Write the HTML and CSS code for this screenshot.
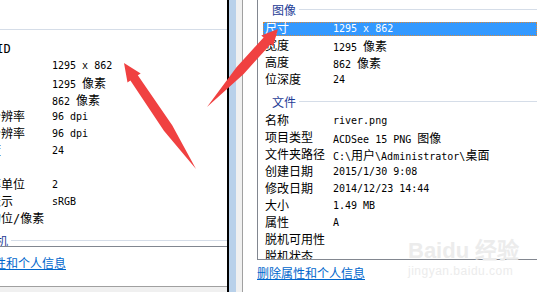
FILE: index.html
```html
<!DOCTYPE html>
<html lang="zh-CN">
<head>
    <meta charset="UTF-8">
    <meta name="viewport" content="width=device-width, initial-scale=1.0">
    <title>属性 - 详细信息</title>
    <link rel="stylesheet" href="styles.css">
</head>
<body>
    <div class="screen">
        <!-- Left dialog (scrolled, labels cut off) -->
        <div class="pane pane-left">
            <div class="prop-box">
                <div class="prop-list">
                    <div class="group"><span class="group-title">图像</span></div>
                    <div class="row"><span class="key">图像 ID</span><span class="val"></span></div>
                    <div class="row"><span class="key">尺寸</span><span class="val">1295 x 862</span></div>
                    <div class="row"><span class="key">宽度</span><span class="val">1295 <span class="cn">像素</span></span></div>
                    <div class="row"><span class="key">高度</span><span class="val">862 <span class="cn">像素</span></span></div>
                    <div class="row"><span class="key">水平分辨率</span><span class="val">96 dpi</span></div>
                    <div class="row"><span class="key">垂直分辨率</span><span class="val">96 dpi</span></div>
                    <div class="row"><span class="key">位深度</span><span class="val">24</span></div>
                    <div class="row"><span class="key">压缩</span><span class="val"></span></div>
                    <div class="row"><span class="key">分辨率单位</span><span class="val">2</span></div>
                    <div class="row"><span class="key">颜色表示</span><span class="val">sRGB</span></div>
                    <div class="row"><span class="key">压缩的位/像素</span><span class="val"></span></div>
                    <div class="group"><span class="group-title">照相机</span></div>
                </div>
            </div>
            <a class="remove-link" href="#">删除属性和个人信息</a>
            <div class="button-bar"></div>
        </div>

        <div class="splitter"></div>

        <!-- Right dialog -->
        <div class="pane pane-right">
            <div class="prop-box">
                <div class="prop-list">
                    <div class="group"><span class="group-title">图像</span></div>
                    <div class="row selected"><span class="key">尺寸</span><span class="val">1295 x 862</span></div>
                    <div class="row"><span class="key">宽度</span><span class="val">1295 <span class="cn">像素</span></span></div>
                    <div class="row"><span class="key">高度</span><span class="val">862 <span class="cn">像素</span></span></div>
                    <div class="row"><span class="key">位深度</span><span class="val">24</span></div>
                    <div class="group"><span class="group-title">文件</span></div>
                    <div class="row"><span class="key">名称</span><span class="val">river.png</span></div>
                    <div class="row"><span class="key">项目类型</span><span class="val">ACDSee 15 PNG <span class="cn">图像</span></span></div>
                    <div class="row"><span class="key">文件夹路径</span><span class="val">C:\<span class="cn">用户</span>\Administrator\<span class="cn">桌面</span></span></div>
                    <div class="row"><span class="key">创建日期</span><span class="val">2015/1/30 9:08</span></div>
                    <div class="row"><span class="key">修改日期</span><span class="val">2014/12/23 14:44</span></div>
                    <div class="row"><span class="key">大小</span><span class="val">1.49 MB</span></div>
                    <div class="row"><span class="key">属性</span><span class="val">A</span></div>
                    <div class="row"><span class="key">脱机可用性</span><span class="val"></span></div>
                    <div class="row"><span class="key">脱机状态</span><span class="val"></span></div>
                </div>
            </div>
            <a class="remove-link" href="#">删除属性和个人信息</a>
        </div>

        <!-- red annotation arrows -->
        <svg class="arrows" width="537" height="292" viewBox="0 0 537 292">
            <polygon points="124,63 140.7,73.4 137.8,75.3 172.2,125.2 196,169 163.9,130.8 130.4,80.4 127.5,82.4" />
            <polygon points="278,29 261.3,35.4 263.6,37.5 236.5,67.3 207,107 243.7,73.9 270.8,44.1 273.1,46.2" />
        </svg>

        <div class="watermark">
            <div class="wm-logo">Bai<span class="wm-du">du</span> 经验</div>
            <div class="wm-url">jingyan.baidu.com</div>
        </div>
    </div>
</body>
</html>
```

FILE: styles.css
```css
body {
    margin: 0;
    font-family: "Noto Sans CJK SC", sans-serif;
    font-size: 12px;
    color: #000;
    background: #fff;
}

.screen {
    position: relative;
    display: flex;
    width: 537px;
    height: 292px;
    overflow: hidden;
}

.pane {
    display: flex;
    flex-direction: column;
    overflow: hidden;
    background: #fff;
}

.pane-left {
    width: 227px;
    flex-shrink: 0;
    border-right: 2px solid #000;
}

.splitter {
    width: 13px;
    flex-shrink: 0;
    background: linear-gradient(to right, #b9d1ea 0 7px, #f0f0f0 7px 13px);
    border-right: 1px solid #a0a0a0;
}

.pane-right {
    flex: 1;
}

.prop-box {
    overflow: hidden;
    border-bottom: 1px solid #828790;
    flex-shrink: 0;
}

.pane-left .prop-box {
    height: 246px;
}

.pane-right .prop-box {
    height: 259px;
    margin-left: 14px;
    border-left: 1px solid #828790;
}

.pane-left .prop-list {
    margin-left: -37px;
    padding-top: 20px;
}

.pane-right .prop-list {
    padding-left: 5px;
}

.group {
    display: flex;
    align-items: center;
    height: 19px;
    margin: 5px 0 3px;
    white-space: nowrap;
}

.group:first-child {
    margin-top: 0;
}

.group-title {
    padding-left: 9px;
    color: #1e3c96;
    line-height: 19px;
}

.group::after {
    content: "";
    flex: 1;
    height: 1px;
    margin-left: 3px;
    background: #d5dde8;
}

.row {
    display: flex;
    height: 14px;
    line-height: 14px;
    margin-bottom: 3px;
    white-space: nowrap;
}

.key {
    box-sizing: border-box;
    flex-shrink: 0;
    padding-left: 2px;
    font-family: "DejaVu Sans Mono", "Noto Sans CJK SC", monospace;
}

.pane-left .key {
    width: 89px;
}

.pane-right .key {
    width: 70px;
}

.val {
    font-family: "DejaVu Sans Mono", monospace;
    font-size: 10px;
}

.val .cn {
    font-family: "Noto Sans CJK SC", sans-serif;
    font-size: 12px;
}

.row.selected {
    background: #3399ff;
    color: #fff;
    outline: 1px dotted #d8893c;
    outline-offset: -1px;
}

.remove-link {
    display: block;
    line-height: 14px;
    color: #0066cc;
    white-space: nowrap;
}

.pane-left .remove-link {
    margin: 9px 0 0 -42px;
}

.pane-right .remove-link {
    margin: 6px 0 0 14px;
}

.button-bar {
    margin-top: auto;
    height: 5px;
    border-top: 1px solid #a0a0a0;
    background: #f0f0f0;
}

.arrows {
    position: absolute;
    left: 0;
    top: 0;
    pointer-events: none;
}

.arrows polygon {
    fill: #f04141;
}

.watermark {
    position: absolute;
    left: 408px;
    top: 238px;
    color: #ececec;
    font-family: "Liberation Sans", sans-serif;
    pointer-events: none;
}

.wm-logo {
    font-size: 22px;
    font-weight: bold;
    line-height: 26px;
}

.wm-url {
    font-size: 12px;
    line-height: 14px;
    letter-spacing: 0.5px;
}
```
